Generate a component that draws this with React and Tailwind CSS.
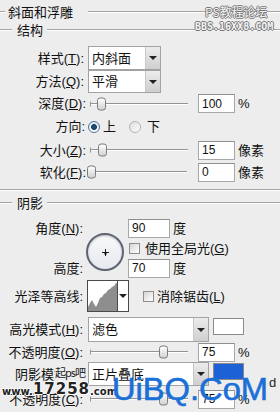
import React from "react";

const Line = ({ className = "flex-1" }) => (
  <div className={`${className} h-[2px] border-t border-[#a3a3a3] border-b border-b-white`} />
);

const Arrow = () => (
  <div className="w-0 h-0 border-l-[4px] border-r-[4px] border-t-[4px] border-l-transparent border-r-transparent border-t-[#222]" />
);

const Select = ({ value, w }) => (
  <div className={`flex h-full ${w} bg-white border border-[#a2a2a2]`}>
    <span className="flex-1 flex items-center pl-[3px]">{value}</span>
    <div className="w-[15px] border-l border-[#c8c8c8] bg-gradient-to-b from-[#ececec] to-[#cfcfcf] flex items-center justify-center">
      <Arrow />
    </div>
  </div>
);

const Input = ({ v, w = "w-[37px]" }) => (
  <div
    className={`${w} h-[19px] bg-white border border-[#a7a7a7] border-t-[#8f8f8f] pl-[3px] flex items-center text-[12px] font-['Liberation_Sans',sans-serif]`}
  >
    {v}
  </div>
);

const Slider = ({ thumb }) => (
  <div className="relative w-[100px] h-full">
    <div className="absolute left-[3px] right-0 top-1/2 -translate-y-1/2 h-[2px] border-t border-[#949494] border-b border-b-white" />
    <div className="absolute left-[2px] top-1/2 -translate-y-1/2 w-px h-[5px] bg-[#949494]" />
    <div
      className={`absolute ${thumb} top-1/2 -translate-y-1/2 w-[9px] h-[13px] rounded-[3px] border border-[#7b7b7b] bg-gradient-to-b from-white to-[#d2d2d2]`}
    />
  </div>
);

const Check = () => (
  <div className="w-[11px] h-[11px] border border-[#8e8e8e] bg-gradient-to-br from-[#d6d6d6] to-white" />
);

const Swatch = ({ color }) => (
  <div className={`self-start mt-[1px] ml-[4px] w-[31px] h-[17px] border border-[#8a8a8a] ${color}`} />
);

const Label = ({ children, w = "w-[84px]" }) => (
  <div className={`${w} text-right shrink-0`}>{children}</div>
);

const Unit = ({ children }) => <span className="ml-[3px]">{children}</span>;

export default function App() {
  return (
    <div className="relative w-[280px] h-[412px] overflow-hidden bg-[#ededed] text-[13px] leading-none text-[#111] font-['Liberation_Sans','Noto_Sans_CJK_SC',sans-serif]">
      {/* 标题 */}
      <div className="flex items-center h-[24px]">
        <Line className="w-[5px]" />
        <span className="ml-[3px]">斜面和浮雕</span>
        <Line className="ml-[15px] flex-1" />
      </div>

      {/* 结构 */}
      <div className="flex items-center h-[12px]">
        <Line className="w-[12px]" />
        <span className="ml-[5px]">结构</span>
        <Line className="ml-[4px] flex-1" />
      </div>

      <div className="mt-[10px] flex items-center h-[24px]">
        <Label>样式(<u>T</u>):</Label>
        <div className="ml-[4px] h-full">
          <Select value="内斜面" w="w-[73px]" />
        </div>
      </div>
      <div className="flex items-center h-[23px]">
        <Label>方法(<u>Q</u>):</Label>
        <div className="ml-[4px] h-full">
          <Select value="平滑" w="w-[73px]" />
        </div>
      </div>
      <div className="flex items-center h-[21px]">
        <Label w="w-[86px]">深度(<u>D</u>):</Label>
        <div className="ml-[2px] h-full">
          <Slider thumb="left-[9px]" />
        </div>
        <div className="ml-[10px]">
          <Input v="100" />
        </div>
        <Unit>%</Unit>
      </div>
      <div className="flex items-center h-[25px]">
        <Label w="w-[85px]">方向:</Label>
        <div className="ml-[3px] w-[12px] h-[12px] rounded-full border border-[#4f7397] bg-gradient-to-b from-[#d9e6f3] to-white flex items-center justify-center">
          <div className="w-[6px] h-[6px] rounded-full bg-[#1f4d78] border border-[#0f2f4f]" />
        </div>
        <span className="ml-[3px]">上</span>
        <div className="ml-[13px] w-[12px] h-[12px] rounded-full border border-[#b4b4b4] bg-gradient-to-br from-[#dcdcdc] to-white" />
        <span className="ml-[6px]">下</span>
      </div>
      <div className="flex items-center h-[22px]">
        <Label w="w-[86px]">大小(<u>Z</u>):</Label>
        <div className="ml-[2px] h-full">
          <Slider thumb="left-[10px]" />
        </div>
        <div className="ml-[10px]">
          <Input v="15" />
        </div>
        <Unit>像素</Unit>
      </div>
      <div className="flex items-center h-[22px]">
        <Label w="w-[86px]">软化(<u>F</u>):</Label>
        <div className="ml-[1px] h-full">
          <Slider thumb="left-0" />
        </div>
        <div className="ml-[11px]">
          <Input v="0" />
        </div>
        <Unit>像素</Unit>
      </div>

      <Line className="mt-[6px] w-full" />

      {/* 阴影 */}
      <div className="mt-[6px] flex items-center h-[12px]">
        <Line className="w-[12px]" />
        <span className="ml-[5px]">阴影</span>
        <Line className="ml-[4px] flex-1" />
      </div>

      <div className="mt-[9px] flex h-[60px]">
        <div className="w-[83px] shrink-0 flex flex-col justify-between text-right">
          <div className="h-[20px] flex items-center justify-end">角度(<u>N</u>):</div>
          <div className="h-[20px] flex items-center justify-end">高度:</div>
        </div>
        <div className="ml-[3px] mt-[15px] w-[38px] h-[38px] rounded-full border-2 border-[#5d6573] bg-gradient-to-b from-[#f8f9fb] to-[#e6e9ee] shadow-[inset_0_1px_2px_rgba(0,0,0,0.25)] flex items-center justify-center">
          <svg width="7" height="7" viewBox="0 0 7 7">
            <path d="M3.5 0v7M0 3.5h7" stroke="#222" strokeWidth="1" />
            <rect x="2.5" y="3.5" width="2" height="2" fill="#000" />
          </svg>
        </div>
        <div className="ml-[4px] flex flex-col">
          <div className="h-[20px] flex items-center">
            <Input v="90" w="w-[42px]" />
            <Unit>度</Unit>
          </div>
          <div className="h-[20px] flex items-center">
            <div className="ml-px">
              <Check />
            </div>
            <span className="ml-[5px]">使用全局光(<u>G</u>)</span>
          </div>
          <div className="h-[20px] flex items-center">
            <Input v="70" w="w-[42px]" />
            <Unit>度</Unit>
          </div>
        </div>
      </div>

      <div className="mt-[2px] flex items-center h-[32px]">
        <Label w="w-[83px]">光泽等高线:</Label>
        <div className="ml-[4px] w-[42px] h-[32px] flex border border-[#4a4a4a] bg-white">
          <svg width="29" height="30" viewBox="0 0 29 30" className="shrink-0">
            <path
              d="M0 30 L0 26 L2 22 L4 19 L6 23 L8 26 L10 22 L12 17 L14 16 L16 13 L18 12 L20 9 L22 8 L24 6 L26 5 L28 2 L29 2 L29 30 Z"
              fill="#8e8e8e"
            />
          </svg>
          <div className="flex-1 border-l border-[#4a4a4a] flex items-center justify-center">
            <Arrow />
          </div>
        </div>
        <div className="ml-[14px]">
          <Check />
        </div>
        <span className="ml-[3px]">消除锯齿(<u>L</u>)</span>
      </div>

      <div className="mt-[5px] flex items-center h-[25px]">
        <Label w="w-[83px]">高光模式(<u>H</u>):</Label>
        <div className="ml-[5px] h-full">
          <Select value="滤色" w="w-[121px]" />
        </div>
        <Swatch color="bg-white" />
      </div>
      <div className="flex items-center h-[20px]">
        <Label w="w-[83px]">不透明度(<u>O</u>):</Label>
        <div className="ml-[5px] h-full">
          <Slider thumb="left-[71px]" />
        </div>
        <div className="ml-[10px]">
          <Input v="75" />
        </div>
        <Unit>%</Unit>
      </div>
      <div className="flex items-center h-[24px]">
        <div className="w-[83px] shrink-0 pl-[15px]">阴影模式</div>
        <div className="ml-[5px] h-full">
          <Select value="正片叠底" w="w-[121px]" />
        </div>
        <Swatch color="bg-[#1c62d6]" />
      </div>
      <div className="mt-[2px] flex items-center h-[22px]">
        <Label w="w-[83px]">不透明度(<u>C</u>):</Label>
        <div className="ml-[5px] h-full">
          <Slider thumb="left-[71px]" />
        </div>
        <div className="ml-[10px]">
          <Input v="75" />
        </div>
        <Unit>%</Unit>
      </div>

      {/* 水印 */}
      <div className="absolute left-[205px] top-[6px] text-[12px] text-[#f4f4f4] font-['Noto_Sans_CJK_SC',sans-serif] whitespace-nowrap [text-shadow:1px_0_#777,-1px_0_#777,0_1px_#777,0_-1px_#777]">
        PS教程论坛
      </div>
      <div className="absolute left-[195px] top-[22px] text-[10px] font-bold text-[#f4f4f4] font-['DejaVu_Sans_Mono',monospace] whitespace-nowrap [text-shadow:1px_0_#777,-1px_0_#777,0_1px_#777,0_-1px_#777]">
        BBS.16XX8.COM
      </div>
      <div className="absolute left-[55px] top-[367px] w-[32px] h-[14px] bg-[#ededed] text-[11px] tracking-[-1px] text-[#222] font-['Noto_Sans_CJK_SC',sans-serif] whitespace-nowrap">
        起ps吧
      </div>
      <div className="absolute left-[2px] top-[382px] flex items-end text-[#222] font-['DejaVu_Sans',sans-serif] font-bold whitespace-nowrap [text-shadow:1px_0_#fff,-1px_0_#fff,0_1px_#fff,0_-1px_#fff]">
        <span className="text-[10px]">www.</span>
        <span className="text-[15px] tracking-[1px]">17258</span>
        <span className="text-[10px]">.com</span>
      </div>
      <div className="absolute left-[269px] top-[376px] text-[13px] text-[#222]">d</div>
      <svg className="absolute left-0 top-0 pointer-events-none" width="280" height="412">
        <text
          x="112"
          y="400"
          className="text-[32px] font-['Liberation_Sans',sans-serif]"
          textLength="156"
          lengthAdjust="spacingAndGlyphs"
          fill="#1a6fd8"
          stroke="#1a6fd8"
          strokeWidth="0.6"
        >
          UiBQ.CoM
        </text>
      </svg>
    </div>
  );
}
